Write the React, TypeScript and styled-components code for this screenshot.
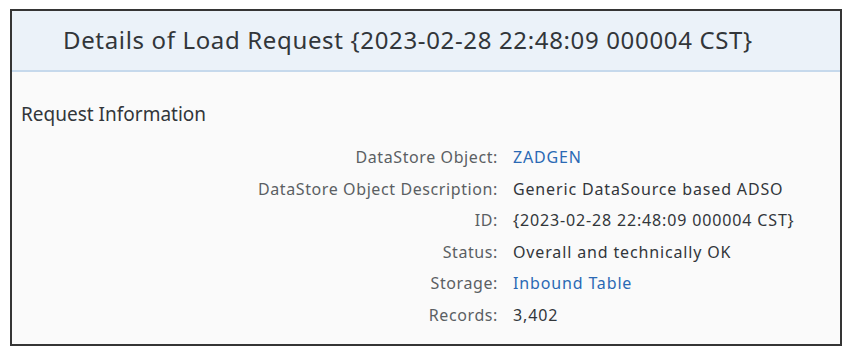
import React from "react";
import styled, { createGlobalStyle } from "styled-components";

const Global = createGlobalStyle`
  html, body { margin: 0; padding: 0; background: #ffffff; }
  body { font-family: "Noto Sans", "Open Sans", Arial, sans-serif; }
`;

const Page = styled.div`
  padding: 9px 10px 0 10px;
  width: 852px;
  box-sizing: border-box;
`;

const Frame = styled.div`
  width: 832px;
  height: 337px;
  box-sizing: border-box;
  border: 2px solid #353535;
  background: #fafafa;
  display: flex;
  flex-direction: column;
`;

const Header = styled.div`
  height: 61px;
  box-sizing: border-box;
  background: #ebf2f9;
  border-bottom: 2px solid #c6d9ec;
  display: flex;
  align-items: center;
  padding-left: 51px;
`;

const Title = styled.h1`
  margin: 0 0 3px 0;
  font-size: 24px;
  font-weight: 400;
  color: #32363a;
  letter-spacing: 0.65px;
`;

const Body = styled.div`
  padding: 30px 0 0 9px;
`;

const SectionTitle = styled.h2`
  margin: 0;
  font-size: 19px;
  font-weight: 400;
  color: #32363a;
  line-height: 24px;
`;

const Form = styled.div`
  margin-top: 16px;
  display: grid;
  grid-template-columns: 477px auto;
  column-gap: 15px;
  row-gap: 0;
`;

const Label = styled.div`
  text-align: right;
  font-size: 16px;
  letter-spacing: 0.6px;
  color: #5b5f63;
  line-height: 31.6px;
`;

const Value = styled.div<{ $link?: boolean }>`
  font-size: 16px;
  letter-spacing: 0.85px;
  line-height: 31.6px;
  color: ${(p) => (p.$link ? "#2a69b4" : "#32363a")};
`;

const rows: { label: string; value: string; link?: boolean }[] = [
  { label: "DataStore Object:", value: "ZADGEN", link: true },
  { label: "DataStore Object Description:", value: "Generic DataSource based ADSO" },
  { label: "ID:", value: "{2023-02-28 22:48:09 000004 CST}" },
  { label: "Status:", value: "Overall and technically OK" },
  { label: "Storage:", value: "Inbound Table", link: true },
  { label: "Records:", value: "3,402" },
];

export default function App() {
  return (
    <>
      <Global />
      <Page>
        <Frame>
          <Header>
            <Title>Details of Load Request {"{2023-02-28 22:48:09 000004 CST}"}</Title>
          </Header>
          <Body>
            <SectionTitle>Request Information</SectionTitle>
            <Form>
              {rows.map((r) => (
                <React.Fragment key={r.label}>
                  <Label>{r.label}</Label>
                  <Value $link={r.link}>{r.value}</Value>
                </React.Fragment>
              ))}
            </Form>
          </Body>
        </Frame>
      </Page>
    </>
  );
}
